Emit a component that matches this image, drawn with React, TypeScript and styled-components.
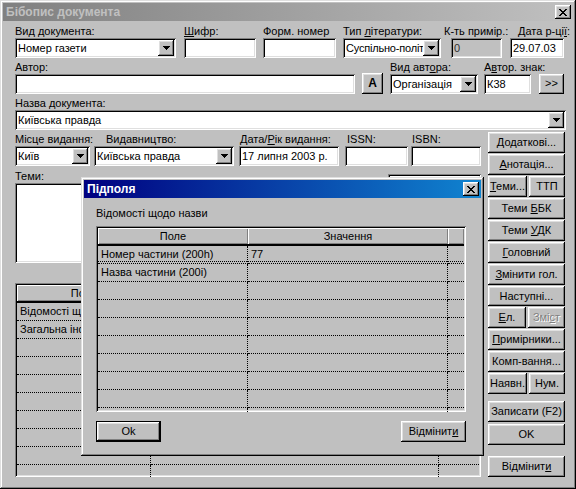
import React from "react";
import styled, { createGlobalStyle, css } from "styled-components";

const GlobalStyle = createGlobalStyle`
  * { box-sizing: border-box; }
  html, body { margin: 0; padding: 0; background: #c0c0c0; }
  body {
    font-family: "Liberation Sans", Arial, sans-serif;
    font-size: 11px;
    color: #000;
  }
`;

const raised = css`
  box-shadow: inset -1px -1px #000, inset 1px 1px #fff,
    inset -2px -2px #808080, inset 2px 2px #dfdfdf;
`;

const sunken = css`
  box-shadow: inset 1px 1px #808080, inset -1px -1px #fff,
    inset 2px 2px #000, inset -2px -2px #dfdfdf;
`;

const frame = css`
  box-shadow: inset -1px -1px #000, inset 1px 1px #dfdfdf,
    inset -2px -2px #808080, inset 2px 2px #fff;
`;

const Window = styled.div`
  position: relative;
  width: 576px;
  height: 489px;
  padding: 3px;
  background: #c0c0c0;
  display: flex;
  flex-direction: column;
  ${frame};
`;

const TitleBar = styled.div<{ $active?: boolean }>`
  flex: none;
  height: 18px;
  display: flex;
  align-items: center;
  justify-content: space-between;
  padding: 0 2px 0 3px;
  background: ${(p) =>
    p.$active
      ? "linear-gradient(90deg, #000080, #1084d0)"
      : "linear-gradient(90deg, #808080, #c0c0c0)"};
  color: ${(p) => (p.$active ? "#fff" : "#c0c0c0")};
  font-weight: bold;
  font-size: 12px;
  white-space: nowrap;
`;

const CloseBox = styled.div`
  width: 16px;
  height: 14px;
  background: #c0c0c0;
  display: flex;
  align-items: center;
  justify-content: center;
  ${raised};
`;

const Body = styled.div`
  flex: 1;
  display: flex;
  flex-direction: column;
  gap: 3px;
  padding: 4px 7px 0 12px;
`;

const Row = styled.div`
  display: flex;
  align-items: flex-end;
`;

const Field = styled.div<{ $w?: number; $ml?: number; $end?: boolean; $grow?: boolean }>`
  display: flex;
  flex-direction: column;
  align-items: ${(p) => (p.$end ? "flex-end" : "stretch")};
  width: ${(p) => (p.$w ? `${p.$w}px` : "auto")};
  flex: ${(p) => (p.$grow ? "1" : "none")};
  margin-left: ${(p) => p.$ml ?? 0}px;
`;

const Label = styled.div<{ $indent?: number }>`
  align-self: stretch;
  height: 13px;
  line-height: 13px;
  white-space: nowrap;
  padding-left: ${(p) => p.$indent ?? 0}px;
`;

const Acc = styled.span`
  text-decoration: underline;
  text-underline-offset: 1px;
`;

const TextBox = styled.div<{ $w?: number; $disabled?: boolean }>`
  width: ${(p) => (p.$w ? `${p.$w}px` : "100%")};
  height: 20px;
  padding: 0 3px;
  line-height: 20px;
  white-space: nowrap;
  overflow: hidden;
  background: ${(p) => (p.$disabled ? "#c0c0c0" : "#fff")};
  color: ${(p) => (p.$disabled ? "#303030" : "#000")};
  ${sunken};
`;

const ComboBox = styled.div`
  height: 20px;
  padding: 2px;
  display: flex;
  background: #fff;
  ${sunken};
`;

const ComboText = styled.span<{ $tight?: boolean }>`
  flex: 1;
  min-width: 0;
  padding-left: 1px;
  line-height: 16px;
  overflow: hidden;
  white-space: nowrap;
  letter-spacing: ${(p) => (p.$tight ? "-0.2px" : "normal")};
`;

const DropButton = styled.div`
  flex: none;
  width: 16px;
  background: #c0c0c0;
  display: flex;
  align-items: center;
  justify-content: center;
  ${raised};
`;

const Button = styled.div<{
  $w?: number;
  $h?: number;
  $ml?: number;
  $mt?: number;
  $bold?: boolean;
  $default?: boolean;
  $disabled?: boolean;
}>`
  flex: ${(p) => (p.$w ? "none" : "1")};
  width: ${(p) => (p.$w ? `${p.$w}px` : "100%")};
  height: ${(p) => p.$h ?? 21}px;
  line-height: ${(p) => (p.$h ?? 21) - 1}px;
  margin: ${(p) => p.$mt ?? 0}px 0 0 ${(p) => p.$ml ?? 0}px;
  background: #c0c0c0;
  font-size: ${(p) => (p.$bold ? "12px" : "11px")};
  font-weight: ${(p) => (p.$bold ? "bold" : "normal")};
  color: ${(p) => (p.$disabled ? "#808080" : "#000")};
  text-shadow: ${(p) => (p.$disabled ? "1px 1px #fff" : "none")};
  text-align: center;
  white-space: nowrap;
  ${(p) =>
    p.$default
      ? css`
          box-shadow: inset 0 0 0 1px #000, inset -2px -2px #000,
            inset 2px 2px #fff, inset -3px -3px #808080, inset 3px 3px #dfdfdf;
        `
      : raised};
`;

const Bottom = styled.div`
  display: flex;
  gap: 7px;
  margin-top: -1px;
`;

const LeftCol = styled.div`
  width: 466px;
  flex: none;
  display: flex;
  flex-direction: column;
  padding-top: 1px;
`;

const TopicsRow = styled.div`
  display: flex;
  align-items: flex-start;
  margin-top: 4px;
`;

const ListBox = styled.div<{ $w?: number; $h: number; $ml?: number; $mt?: number }>`
  width: ${(p) => (p.$w ? `${p.$w}px` : "100%")};
  height: ${(p) => p.$h}px;
  margin: ${(p) => p.$mt ?? 0}px 0 0 ${(p) => p.$ml ?? 0}px;
  background: #fff;
  flex: none;
  ${sunken};
`;

const SideButtons = styled.div`
  width: 77px;
  flex: none;
  display: flex;
  flex-direction: column;
  gap: 1px;
`;

const ButtonPair = styled.div`
  display: flex;
  gap: 2px;
`;

const GridFrame = styled.div<{ $h: number; $mt?: number }>`
  height: ${(p) => p.$h}px;
  margin-top: ${(p) => p.$mt ?? 0}px;
  padding: 2px;
  background: #c0c0c0;
  overflow: hidden;
  flex: none;
  ${sunken};
`;

const HeadLine = styled.div<{ $cols: string }>`
  display: grid;
  grid-template-columns: ${(p) => p.$cols};
  height: 18px;
  border-bottom: 2px solid #000;
`;

const HeadCell = styled.div`
  text-align: center;
  line-height: 16px;
  white-space: nowrap;
  overflow: hidden;
  box-shadow: inset 1px 1px #fff, inset -1px -1px #808080;
`;

const GridLine = styled.div<{ $cols: string; $current?: boolean }>`
  display: grid;
  grid-template-columns: ${(p) => p.$cols};
  height: 18px;
  ${(p) =>
    p.$current &&
    css`
      background-image: repeating-linear-gradient(
        90deg,
        #000 0 1px,
        transparent 1px 2px
      );
      background-size: 100% 1px;
      background-repeat: no-repeat;
      background-position: 0 15px;
    `}
`;

const Cell = styled.div<{ $last?: boolean }>`
  border-bottom: 1px dotted #000;
  border-right: ${(p) => (p.$last ? "none" : "1px dotted #000")};
  padding-left: 3px;
  line-height: 17px;
  white-space: nowrap;
  overflow: hidden;
`;

const Popup = styled.div`
  position: absolute;
  left: 81px;
  top: 177px;
  width: 403px;
  height: 279px;
  padding: 3px;
  background: #c0c0c0;
  display: flex;
  flex-direction: column;
  ${frame};
`;

const PopupBody = styled.div`
  flex: 1;
  display: flex;
  flex-direction: column;
  padding: 9px 15px 0 12px;
`;

const PopupButtons = styled.div`
  display: flex;
  justify-content: space-between;
  margin-top: 9px;
`;

const CloseIcon = () => (
  <svg width="8" height="7" viewBox="0 0 8 7" shapeRendering="crispEdges">
    <path
      d="M0 0h2v1H0zM6 0h2v1H6zM1 1h2v1H1zM5 1h2v1H5zM2 2h4v1H2zM3 3h2v1H3zM2 4h4v1H2zM1 5h2v1H1zM5 5h2v1H5zM0 6h2v1H0zM6 6h2v1H6z"
      fill="#000"
    />
  </svg>
);

const DropArrow = () => (
  <svg width="7" height="4" viewBox="0 0 7 4" shapeRendering="crispEdges">
    <path d="M0 0h7v1H0zM1 1h5v1H1zM2 2h3v1H2zM3 3h1v1H3z" fill="#000" />
  </svg>
);

function Combo({ value, tight }: { value: string; tight?: boolean }) {
  return (
    <ComboBox>
      <ComboText $tight={tight}>{value}</ComboText>
      <DropButton>
        <DropArrow />
      </DropButton>
    </ComboBox>
  );
}

type GridProps = {
  cols: string;
  heads: string[];
  rows: string[][];
  lines: number;
  height: number;
  mt?: number;
  current?: number;
};

function DataGrid({ cols, heads, rows, lines, height, mt, current }: GridProps) {
  const filled = Array.from(
    { length: lines },
    (_, i) => rows[i] ?? heads.map(() => "")
  );
  return (
    <GridFrame $h={height} $mt={mt}>
      <HeadLine $cols={cols}>
        {heads.map((h, i) => (
          <HeadCell key={i}>{h}</HeadCell>
        ))}
      </HeadLine>
      {filled.map((r, i) => (
        <GridLine key={i} $cols={cols} $current={i === current}>
          {r.map((c, j) => (
            <Cell key={j} $last={j === r.length - 1}>
              {c}
            </Cell>
          ))}
        </GridLine>
      ))}
    </GridFrame>
  );
}

export default function App() {
  return (
    <>
      <GlobalStyle />
      <Window>
        <TitleBar>
          <span>Бібопис документа</span>
          <CloseBox>
            <CloseIcon />
          </CloseBox>
        </TitleBar>
        <Body>
          <Row>
            <Field $w={161}>
              <Label>Вид документа:</Label>
              <Combo value="Номер газети" />
            </Field>
            <Field $w={72} $ml={8}>
              <Label>
                <Acc>Ш</Acc>ифр:
              </Label>
              <TextBox />
            </Field>
            <Field $w={73} $ml={7}>
              <Label>Форм. номер</Label>
              <TextBox />
            </Field>
            <Field $w={98} $ml={7}>
              <Label>
                Тип <Acc>л</Acc>ітератури:
              </Label>
              <Combo value="Суспільно-політ" tight />
            </Field>
            <Field $w={58} $ml={3} $end>
              <Label>К-ть примір.:</Label>
              <TextBox $w={51} $disabled>
                0
              </TextBox>
            </Field>
            <Field $w={54} $ml={8}>
              <Label $indent={8}>
                Дата р-ці<Acc>ї</Acc>:
              </Label>
              <TextBox>29.07.03</TextBox>
            </Field>
          </Row>

          <Row>
            <Field $w={340}>
              <Label>Автор:</Label>
              <TextBox />
            </Field>
            <Button $w={21} $ml={7} $bold>
              A
            </Button>
            <Field $w={88} $ml={7}>
              <Label>
                Вид авт<Acc>о</Acc>ра:
              </Label>
              <Combo value="Організація" />
            </Field>
            <Field $w={47} $ml={6}>
              <Label>
                А<Acc>в</Acc>тор. знак:
              </Label>
              <TextBox>К38</TextBox>
            </Field>
            <Button $w={25} $h={20} $ml={8}>
              &gt;&gt;
            </Button>
          </Row>

          <Field>
            <Label>Назва документа:</Label>
            <Combo value="Київська правда" />
          </Field>

          <Bottom>
            <LeftCol>
              <Row>
                <Field $w={75}>
                  <Label>Місце видання:</Label>
                  <Combo value="Київ" />
                </Field>
                <Field $w={140} $ml={4}>
                  <Label $indent={12}>Видавництво:</Label>
                  <Combo value="Київська правда" />
                </Field>
                <Field $w={100} $ml={5}>
                  <Label $indent={1}>
                    Дата/<Acc>Р</Acc>ік видання:
                  </Label>
                  <TextBox>17 липня 2003 р.</TextBox>
                </Field>
                <Field $w={63} $ml={6}>
                  <Label $indent={2}>ISSN:</Label>
                  <TextBox />
                </Field>
                <Field $w={70} $ml={3}>
                  <Label $indent={1}>ISBN:</Label>
                  <TextBox />
                </Field>
              </Row>

              <TopicsRow>
                <Field $grow>
                  <Label>Теми:</Label>
                  <ListBox $h={80} />
                </Field>
                <ListBox $w={93} $h={89} $ml={5} $mt={4} />
              </TopicsRow>

              <DataGrid
                mt={20}
                height={194}
                lines={10}
                cols="134px 288px 1fr"
                heads={["Поле", "Значення", ""]}
                rows={[
                  ["Відомості щодо назви", "", ""],
                  ["Загальна інформація", "", ""],
                ]}
              />
            </LeftCol>

            <SideButtons>
              <Button>
                <Acc>Д</Acc>одаткові...
              </Button>
              <Button>
                <Acc>А</Acc>нотація...
              </Button>
              <ButtonPair>
                <Button $w={39}>
                  <Acc>Т</Acc>еми...
                </Button>
                <Button>ТТП</Button>
              </ButtonPair>
              <Button>
                Теми <Acc>Б</Acc>БК
              </Button>
              <Button>
                Теми <Acc>У</Acc>ДК
              </Button>
              <Button>
                <Acc>Г</Acc>оловний
              </Button>
              <Button>
                <Acc>З</Acc>мінити гол.
              </Button>
              <Button>Наступні...</Button>
              <ButtonPair>
                <Button $w={38}>
                  <Acc>Е</Acc>л.
                </Button>
                <Button $disabled>
                  Змі<Acc>с</Acc>т
                </Button>
              </ButtonPair>
              <Button>
                <Acc>П</Acc>римірники...
              </Button>
              <Button>Комп-вання...</Button>
              <ButtonPair>
                <Button $w={39}>Наявн.</Button>
                <Button>Нум.</Button>
              </ButtonPair>
              <Button $mt={6}>Записати (F2)</Button>
              <Button $mt={1}>OK</Button>
              <Button $mt={10}>
                Відмінит<Acc>и</Acc>
              </Button>
            </SideButtons>
          </Bottom>
        </Body>

        <Popup>
          <TitleBar $active>
            <span>Підполя</span>
            <CloseBox>
              <CloseIcon />
            </CloseBox>
          </TitleBar>
          <PopupBody>
            <Label>Відомості щодо назви</Label>
            <DataGrid
              mt={6}
              height={186}
              lines={10}
              current={0}
              cols="150px 200px 1fr"
              heads={["Поле", "Значення", ""]}
              rows={[
                ["Номер частини (200h)", "77", ""],
                ["Назва частини (200i)", "", ""],
              ]}
            />
            <PopupButtons>
              <Button $w={65} $default>
                Ok
              </Button>
              <Button $w={65}>
                Відмінит<Acc>и</Acc>
              </Button>
            </PopupButtons>
          </PopupBody>
        </Popup>
      </Window>
    </>
  );
}
